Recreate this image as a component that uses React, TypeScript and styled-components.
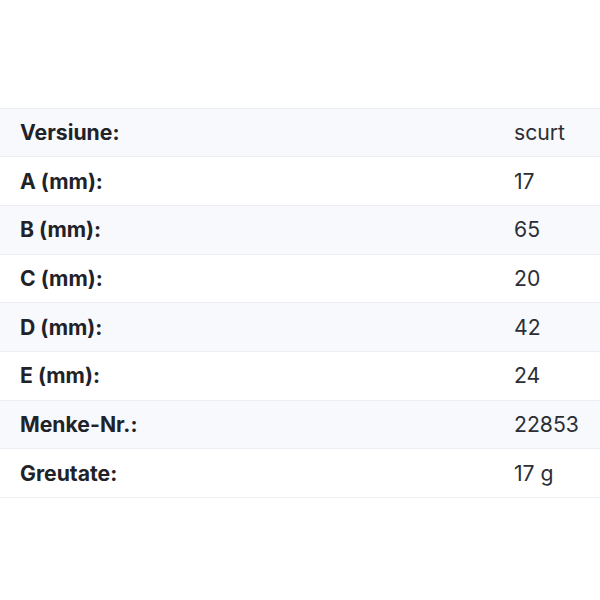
import React from 'react';
import styled, {createGlobalStyle} from 'styled-components';

const GlobalStyle = createGlobalStyle`
  html, body {
    margin: 0;
    padding: 0;
    background: #ffffff;
  }
`;

const Page = styled.div`
  width: 600px;
  height: 600px;
  padding-top: 107.5px;
  box-sizing: border-box;
  background: #ffffff;
  font-family: 'Inter', 'Roboto', sans-serif;
  color: #212529;
`;

const SpecTable = styled.table`
  width: 100%;
  border-collapse: collapse;
  font-size: 21.2px;
`;

const Row = styled.tr<{$striped: boolean}>`
  background: ${(props) => (props.$striped ? '#f8f9fc' : '#ffffff')};
  border-top: 1.5px solid #eceef4;
  border-bottom: 1.5px solid #eceef4;
`;

const Label = styled.td`
  height: 47.7px;
  padding: 0 0 0 20px;
  font-weight: 700;
  line-height: 25px;
  color: #1f2329;
`;

const Value = styled.td`
  width: 86px;
  padding: 0;
  line-height: 25px;
  color: #2b2f35;
`;

const specs: [string, string][] = [
  ['Versiune:', 'scurt'],
  ['A (mm):', '17'],
  ['B (mm):', '65'],
  ['C (mm):', '20'],
  ['D (mm):', '42'],
  ['E (mm):', '24'],
  ['Menke-Nr.:', '22853'],
  ['Greutate:', '17 g'],
];

const App = () => {
  return (
    <Page>
      <GlobalStyle />
      <SpecTable>
        <tbody>
          {specs.map(([label, value], index) => (
            <Row key={label} $striped={index % 2 === 0}>
              <Label>{label}</Label>
              <Value>{value}</Value>
            </Row>
          ))}
        </tbody>
      </SpecTable>
    </Page>
  );
};

export default App;
